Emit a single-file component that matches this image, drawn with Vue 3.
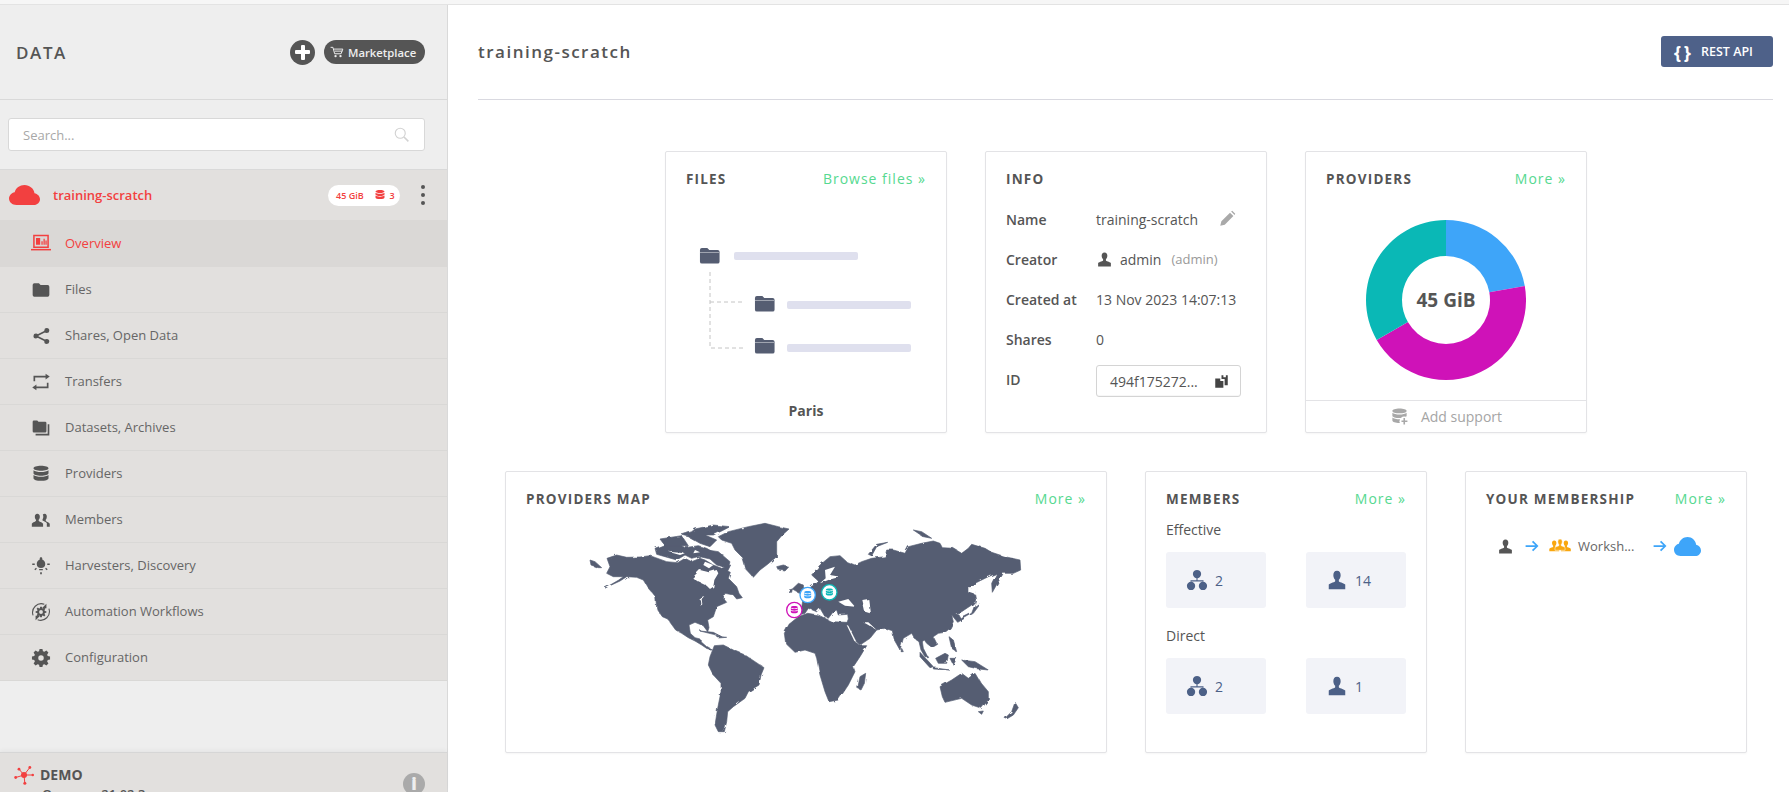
<script setup>
const gear = (cx, cy, r1, r2, hole, n = 8) => {
  let d = ''
  const step = (Math.PI * 2) / n
  for (let i = 0; i < n; i++) {
    const a = i * step
    const pts = [
      [r2, a - step * 0.36], [r1, a - step * 0.2], [r1, a + step * 0.2], [r2, a + step * 0.36]
    ]
    pts.forEach(([r, t], j) => {
      d += `${i === 0 && j === 0 ? 'M' : 'L'}${(cx + r * Math.sin(t)).toFixed(2)} ${(cy - r * Math.cos(t)).toFixed(2)}`
    })
  }
  d += `Z M${cx - hole} ${cy}a${hole} ${hole} 0 1 0 ${hole * 2} 0a${hole} ${hole} 0 1 0 ${-hole * 2} 0Z`
  return d
}

const folder = 'M2 6a2 2 0 0 1 2-2h5.500l2 2H20a2 2 0 0 1 2 2v10a2 2 0 0 1-2 2H4a2 2 0 0 1-2-2z'
const person = 'M12 2c-2.800 0-4 2.200-4 4.800 0 2 .8 3.800 2 5v1.600c0 1-5 1.600-7 3.600V22h18v-5c-2-2-7-2.600-7-3.600v-1.600c1.200-1.200 2-3 2-5C16 4.200 14.800 2 12 2z'
const db = 'M12 2c5 0 9 1.200 9 3s-4 3-9 3-9-1.200-9-3 4-3 9-3zM3 7.400c1.600 1.400 5.200 2.200 9 2.200s7.400-.8 9-2.200V11c0 1.700-4 3-9 3s-9-1.300-9-3zM3 13.200c1.600 1.400 5.200 2.200 9 2.200s7.400-.8 9-2.200V17c0 1.800-4 3.200-9 3.200S3 18.800 3 17z'
const cloud = 'M6.500 20C3.400 20 1 17.700 1 14.800c0-2.500 1.800-4.600 4.200-5.100C6 6.400 9 4 12.500 4c3.800 0 7 2.900 7.400 6.500 2.300.5 4.100 2.400 4.100 4.800 0 2.600-2.200 4.700-4.900 4.700z'
const members = 'M7.500 4.500C5.500 4.500 4.600 6.200 4.600 8c0 1.500.6 2.700 1.400 3.600v1.200C6 13.800 2 14.500 1 16.500V20h13.500v-3.500c-1-2-5.300-2.700-5.300-3.700v-1.200c.8-.9 1.400-2.100 1.400-3.600 0-1.800-.9-3.500-3.100-3.500zM16.500 4.500c-1 0-1.800.4-2.300 1 .9 1.800.8 4.200-.4 6v.8c0 .5 3.700 1.600 5.200 3.500V20h3.500v-3.500c-1-2-4.800-2.700-4.800-3.700v-1.200c.8-.9 1.300-2.100 1.300-3.600 0-1.800-.8-3.500-2.500-3.500z'

const nav = [
  { label: 'Overview', active: true, fill: [], stroke: ['M3.500 3h17v14h-17z', 'M0 20h24'], bars: ['M6 6h5v8H6zM12.500 10H14v4h-1.500zM15 7h1.500v7H15zM17.300 9h1.500v5h-1.500z'] },
  { label: 'Files', fill: [folder], stroke: [] },
  { label: 'Shares, Open Data', fill: ['M19 2.500a3 3 0 1 1-.1 6 3 3 0 0 1 .1-6zM19 15.500a3 3 0 1 1-.1 6 3 3 0 0 1 .1-6zM6 9a3 3 0 1 1-.1 6 3 3 0 0 1 .1-6z'], stroke: ['M18 6 6 12l12 6'] },
  { label: 'Transfers', fill: ['M17.500 2l5 3.500-5 3.500zM6.500 22l-5-3.500 5-3.500z'], stroke: ['M4 11V5.500h15', 'M20 13v5.500H5'] },
  { label: 'Datasets, Archives', fill: ['M2 4.500A1.500 1.500 0 0 1 3.500 3h4l1.500 1.500h8A1.500 1.500 0 0 1 18.500 6v10a1.500 1.500 0 0 1-1.500 1.500H3.500A1.500 1.500 0 0 1 2 16z'], stroke: ['M21 7.500V20H5.500'] },
  { label: 'Providers', fill: [db], stroke: [] },
  { label: 'Members', fill: [members], stroke: [] },
  { label: 'Harvesters, Discovery', fill: ['M12 1.500c.9 0 1.500.6 1.500 1.300v1.400c2.200.9 3.600 3 3.600 5.300 0 2.800-2 5-5.100 5S6.900 12.300 6.900 9.500c0-2.300 1.400-4.400 3.600-5.300V2.800c0-.7.6-1.300 1.500-1.300z', 'M9.800 15.500h4.400V17H9.800zM11 19.500h2V22h-2zM1.500 9h3v1.700h-3zM19.500 9h3v1.700h-3zM4 16l2-1.800 1.100 1.100-2 1.900zM20 16l-2-1.800-1.100 1.100 2 1.900z'], stroke: [] },
  { label: 'Automation Workflows', thin: true, fill: [gear(12, 12, 6.500, 4.800, 2.300), 'M18.500 2v5.500H13zM5.500 22v-5.500H11z'], stroke: ['M2.500 16A10.500 10.500 0 0 1 16 2.700', 'M21.500 8A10.500 10.500 0 0 1 8 21.300'] },
  { label: 'Configuration', fill: [gear(12, 12, 11, 8.400, 3.300)], stroke: [] }
]

const polar = (cx, cy, r, deg) => {
  const t = (deg * Math.PI) / 180
  return [cx + r * Math.sin(t), cy - r * Math.cos(t)]
}
const seg = (a, b, color) => {
  const R = 80, r = 44, c = 80
  const [x1, y1] = polar(c, c, R, a)
  const [x2, y2] = polar(c, c, R, b)
  const [x3, y3] = polar(c, c, r, b)
  const [x4, y4] = polar(c, c, r, a)
  const large = b - a > 180 ? 1 : 0
  return { color, d: `M${x1} ${y1}A${R} ${R} 0 ${large} 1 ${x2} ${y2}L${x3} ${y3}A${r} ${r} 0 ${large} 0 ${x4} ${y4}Z` }
}
const segments = [seg(0, 80, '#3ea5f9'), seg(80, 240, '#cf12b8'), seg(240, 360, '#0ab8b6')]

const land = [
  'M66 130L95 120 125 127 165 126 195 122 212 128 245 140 278 143 300 130 320 140 345 130 360 135 385 150 410 160 437 150 428 168 436 172 430 190 455 215 462 235 472 248 455 252 445 240 420 235 415 250 425 262 395 275 385 305 368 315 372 338 368 350 355 332 330 322 312 330 316 355 330 368 345 372 350 382 365 395 382 405 372 405 350 390 330 378 310 368 290 355 272 345 248 312 232 305 215 280 212 245 190 220 175 195 155 187 125 185 105 198 60 219 100 196 115 185 85 185 65 175 75 155Z',
  'M15 135L30 140 50 158 40 158 18 150Z',
  'M210 100L240 88 270 80 300 98 340 92 365 100 385 112 415 120 395 130 372 126 350 122 320 130 300 120 275 135 240 125 215 118Z',
  'M335 100L400 110 435 140 430 160 395 150 375 132 345 125Z',
  'M225 72L290 62 310 92 240 92Z',
  'M330 42L385 30 435 35 410 48 385 60 360 60 395 75 375 95 345 85 310 65 290 60 320 50Z',
  'M400 65L430 50 490 35 540 25 580 35 612 42 590 62 575 80 575 125 545 150 525 165 505 187 480 160 470 125 450 105 440 85 410 75Z',
  'M575 155L595 150 612 155 600 168 580 165Z',
  'M345 348L385 352 410 365 385 358ZM395 364L425 367 400 369Z',
  'M388 392L415 390 445 405 480 420 510 440 537 458 528 480 522 510 490 530 480 550 445 575 428 590 425 620 418 650 400 650 390 630 398 580 408 530 408 505 385 480 370 450 375 425Z',
  'M598 355L612 328 640 305 668 295 700 300 720 310 740 320 785 322 815 385 825 392 845 392 825 425 805 455 810 470 790 510 760 555 732 560 720 530 705 480 695 430 690 415 660 405 630 412 602 385Z',
  'M680 180L705 150 735 125 765 122 785 140 810 150 830 140 860 130 900 125 905 105 925 105 960 115 970 95 1010 85 1045 78 1065 85 1072 98 1105 100 1130 115 1150 100 1160 88 1200 100 1220 112 1260 125 1305 135 1307 165 1285 175 1255 175 1240 200 1222 232 1220 205 1235 175 1210 185 1170 205 1150 215 1170 230 1175 255 1160 270 1130 290 1100 298 1092 288 1122 300 1130 315 1118 322 1100 300 1105 320 1095 340 1080 352 1060 355 1045 365 1055 385 1038 395 1025 385 1018 375 1012 380 1015 400 1028 425 1020 425 1008 405 1002 380 990 372 980 355 955 370 945 405 928 375 922 347 900 340 875 345 855 370 825 390 815 380 785 325 790 312 788 298 760 300 755 285 745 290 730 310 720 305 705 280 695 290 670 280 660 295 640 300 620 305 610 298 620 280 650 278 655 245 678 215 695 205 700 198Z',
  'M622 222L640 205 655 210 656 225 640 232ZM612 225L622 222 620 232 610 232Z',
  'M850 118L875 88 908 82 875 95 860 122Z',
  'M985 45L1010 50 1040 70 1015 65Z',
  'M818 520L825 485 842 475 838 505 828 525Z',
  'M1065 515L1100 495 1130 475 1150 490 1170 475 1185 500 1210 530 1210 555 1190 580 1160 570 1130 550 1080 562 1072 545Z',
  'M1180 590L1195 588 1190 598Z',
  'M1260 610L1280 590 1290 562 1300 578 1285 600 1265 612Z',
  'M1005 412L1045 455 1035 458 1005 425ZM1045 458L1095 465 1045 462ZM1052 430L1080 415 1090 420 1085 445 1060 445ZM1095 430L1115 430 1105 450ZM1092 365L1105 375 1115 410 1100 400ZM1130 435L1170 440 1210 465 1180 462 1150 455ZM950 400L955 410 948 410Z',
  'M1130 310L1160 295 1175 255 1170 278 1185 268 1165 295 1130 315Z'
]
const seas = [
  'M322 188L345 165 372 172 395 165 400 175 388 195 385 215 375 222 365 212 340 200Z',
  'M340 250L358 243 350 252 352 268 347 272 345 254Z',
  'M415 240L445 240 440 248 420 250Z',
  'M720 165L750 155 735 180 765 185 730 195 705 205 722 190Z',
  'M760 260L790 252 810 275 780 272Z',
  'M832 255L850 252 855 295 840 290Z',
  'M835 322L850 322 875 345 850 330Z',
  'M785 330L790 332 816 385 808 378Z',
  'M1150 215L1170 225 1175 240 1150 232Z',
  'M360 140L385 150 372 160 355 150ZM250 110L300 115 285 120ZM330 105L345 112 325 115Z'
]
const pins = [
  { x: 628, y: 285, color: '#cf12b8' },
  { x: 668, y: 240, color: '#3ea5f9' },
  { x: 733, y: 232, color: '#0ab8b6' }
]
</script>

<template>
  <div class="page">
    <div class="strip"></div>
    <div class="shell">
      <aside class="side">
        <header class="side-head">
          <h1>DATA</h1>
          <div class="head-actions">
            <span class="plus"></span>
            <span class="market">
              <svg viewBox="0 0 24 20" class="cart"><path d="M1 2h4l3 11h11l3-8H6.500M8 8.500h13" fill="none" stroke="#eee" stroke-width="1.700"/><circle cx="9.500" cy="17" r="2" fill="#eee"/><circle cx="18" cy="17" r="2" fill="#eee"/></svg>
              Marketplace
            </span>
          </div>
        </header>
        <div class="search-wrap">
          <div class="search">
            <span>Search...</span>
            <svg viewBox="0 0 24 24" class="mag"><circle cx="10" cy="10" r="8" fill="none" stroke="#d2d2d2" stroke-width="1.800"/><path d="M16 16l7 7" stroke="#d2d2d2" stroke-width="2.500"/></svg>
          </div>
        </div>
        <div class="space-row">
          <svg viewBox="1 4 23 16" class="space-cloud" preserveAspectRatio="none"><path :d="cloud" fill="#f24040"/></svg>
          <span class="space-name">training-scratch</span>
          <span class="space-pill">
            <span>45 GiB</span>
            <svg viewBox="0 0 24 24" class="pill-db"><path :d="db" fill="#f24040"/></svg>
            <span>3</span>
          </span>
          <span class="kebab"><i></i><i></i><i></i></span>
        </div>
        <nav class="nav">
          <div v-for="item in nav" :key="item.label" class="nav-item" :class="{ active: item.active }">
            <svg viewBox="0 0 24 24" class="nav-icon">
              <path v-for="d in item.fill" :key="d" :d="d" fill-rule="evenodd" class="ic-fill" />
              <path v-for="d in item.stroke" :key="d" :d="d" class="ic-stroke" :class="{ thin: item.thin }" />
              <path v-for="d in item.bars || []" :key="d" :d="d" class="ic-fill" />
            </svg>
            <span>{{ item.label }}</span>
          </div>
        </nav>
        <div class="grow"></div>
        <footer class="side-foot">
          <div class="foot-text">
            <div class="demo">
              <svg viewBox="0 0 24 24" class="demo-icon">
                <path d="M12 12L6 5M12 12L19 3M12 12H23M12 12L13 22M12 12L2 15" stroke="#f24040" stroke-width="1.200"/>
                <circle cx="12" cy="12" r="3.600" fill="#f24040"/>
                <circle cx="6" cy="5" r="1.700" fill="#f24040"/><circle cx="19" cy="3" r="1.700" fill="#f24040"/><circle cx="22.500" cy="12" r="1.500" fill="#f24040"/><circle cx="13" cy="22" r="1.800" fill="#f24040"/><circle cx="2" cy="15" r="1.700" fill="#f24040"/>
              </svg>
              <b>DEMO</b>
            </div>
            <div class="version">Onezone 21.02.3</div>
          </div>
          <span class="info">i</span>
        </footer>
      </aside>

      <main class="main">
        <div class="main-head">
          <h2>training-scratch</h2>
          <button class="rest"><b>{ }</b><span>REST API</span></button>
        </div>
        <div class="row row-top">
          <section class="card">
            <div class="card-head"><h3>FILES</h3><a>Browse files »</a></div>
            <svg class="tree" viewBox="0 0 281 170" width="281" height="170">
              <path d="M45 62V138H78M45 92H78" class="dash" />
              <path :d="folder" transform="translate(33 34) scale(.98)" class="tree-f" />
              <rect x="35" y="42" width="19" height=".8" class="tree-l" />
              <rect x="69" y="42" width="124" height="8" rx="2" class="tree-b" />
              <path :d="folder" transform="translate(88 82) scale(.98)" class="tree-f" />
              <rect x="90" y="90" width="19" height=".8" class="tree-l" />
              <rect x="122" y="91" width="124" height="8" rx="2" class="tree-b" />
              <path :d="folder" transform="translate(88 124) scale(.98)" class="tree-f" />
              <rect x="90" y="132" width="19" height=".8" class="tree-l" />
              <rect x="122" y="134" width="124" height="8" rx="2" class="tree-b" />
            </svg>
            <div class="paris">Paris</div>
          </section>

          <section class="card">
            <div class="card-head"><h3>INFO</h3></div>
            <div class="info-list">
              <div class="info-row">
                <label>Name</label>
                <span>training-scratch</span>
                <svg viewBox="0 0 24 24" class="pencil"><path d="M3 21l1.500-6L16 3.500l4.500 4.500L9 19.500zM17.500 2l1.500-1 4 4-1 1.500z" fill="#a9a9a9"/></svg>
              </div>
              <div class="info-row">
                <label>Creator</label>
                <svg viewBox="0 0 24 24" class="creator-i"><path :d="person" fill="#555"/></svg>
                <span>admin</span><em>(admin)</em>
              </div>
              <div class="info-row"><label>Created at</label><span>13 Nov 2023 14:07:13</span></div>
              <div class="info-row"><label>Shares</label><span>0</span></div>
              <div class="info-row">
                <label>ID</label>
                <div class="id-box">
                  <span>494f175272...</span>
                  <svg viewBox="0 0 24 24" class="copy"><path d="M2 7h8v4h5v11H2zM12 2h3v3h4V2h3v16h-5V8h-5z" fill="#444"/></svg>
                </div>
              </div>
            </div>
          </section>

          <section class="card">
            <div class="card-head"><h3>PROVIDERS</h3><a>More »</a></div>
            <div class="donut-wrap">
              <svg viewBox="0 0 160 160" width="160" height="160">
                <path v-for="s in segments" :key="s.color" :d="s.d" :fill="s.color" />
              </svg>
              <span class="donut-label">45 GiB</span>
            </div>
            <div class="add-support">
              <svg viewBox="0 0 24 24" class="add-i"><path :d="db" fill="#a8a8a8"/><circle cx="18" cy="18" r="6" fill="#fff"/><path d="M14.500 17h2.500v-3h2v3h3v2h-3v3h-2v-3h-2.500z" fill="#a8a8a8"/></svg>
              <span>Add support</span>
            </div>
          </section>
        </div>

        <div class="row row-bottom">
          <section class="card map-card">
            <div class="card-head"><h3>PROVIDERS MAP</h3><a>More »</a></div>
            <svg class="map" viewBox="0 0 1350 675" width="450" height="225">
              <defs>
                <filter id="coast" x="-2%" y="-2%" width="104%" height="104%" filterUnits="objectBoundingBox">
                  <feTurbulence type="fractalNoise" baseFrequency="0.045" numOctaves="2" seed="4" result="n" />
                  <feDisplacementMap in="SourceGraphic" in2="n" scale="9" />
                </filter>
              </defs>
              <g filter="url(#coast)">
                <path v-for="d in land" :key="d" :d="d" class="land" />
                <path v-for="d in seas" :key="d" :d="d" fill="#fff" />
              </g>
              <g v-for="p in pins" :key="p.color">
                <circle :cx="p.x" :cy="p.y" r="23" fill="#fff" :stroke="p.color" stroke-width="4" />
                <path :d="db" :fill="p.color" :transform="`translate(${p.x - 14} ${p.y - 14}) scale(1.170)`" />
              </g>
            </svg>
          </section>

          <section class="card">
            <div class="card-head"><h3>MEMBERS</h3><a>More »</a></div>
            <div class="mem-label first">Effective</div>
            <div class="mem-grid">
              <div class="mem-box">
                <svg viewBox="0 0 24 24" class="mem-i"><circle cx="12" cy="5.500" r="4.500"/><circle cx="5.500" cy="18.500" r="4.500"/><circle cx="18.500" cy="18.500" r="4.500"/><path d="M12 9v4M5.500 14v-1h13v1" fill="none" stroke="#4c6087" stroke-width="1.200"/></svg>
                <span>2</span>
              </div>
              <div class="mem-box">
                <svg viewBox="0 0 24 24" class="mem-i"><path :d="person"/></svg>
                <span>14</span>
              </div>
            </div>
            <div class="mem-label">Direct</div>
            <div class="mem-grid">
              <div class="mem-box">
                <svg viewBox="0 0 24 24" class="mem-i"><circle cx="12" cy="5.500" r="4.500"/><circle cx="5.500" cy="18.500" r="4.500"/><circle cx="18.500" cy="18.500" r="4.500"/><path d="M12 9v4M5.500 14v-1h13v1" fill="none" stroke="#4c6087" stroke-width="1.200"/></svg>
                <span>2</span>
              </div>
              <div class="mem-box">
                <svg viewBox="0 0 24 24" class="mem-i"><path :d="person"/></svg>
                <span>1</span>
              </div>
            </div>
          </section>

          <section class="card">
            <div class="card-head"><h3>YOUR MEMBERSHIP</h3><a>More »</a></div>
            <div class="path-row">
              <svg viewBox="0 0 24 24" class="path-person"><path :d="person" fill="#555"/></svg>
              <svg viewBox="0 0 24 24" class="arrow"><path d="M1 12h20M13 4l8 8-8 8" fill="none" stroke="#3ea5f9" stroke-width="3"/></svg>
              <svg viewBox="0 0 32 24" class="group"><path :d="person" fill="#f9a70f" transform="translate(-2.500 2) scale(.82)"/><path :d="person" fill="#f9a70f" transform="translate(15 2) scale(.82)"/><path :d="person" fill="#f9a70f" transform="translate(6 0) scale(.84)" stroke="#fff" stroke-width=".9"/></svg>
              <span class="work">Worksh...</span>
              <svg viewBox="0 0 24 24" class="arrow arrow2"><path d="M1 12h20M13 4l8 8-8 8" fill="none" stroke="#3ea5f9" stroke-width="3"/></svg>
              <svg viewBox="1 4 23 16" class="path-cloud" preserveAspectRatio="none"><path :d="cloud" fill="#3ea5f9"/></svg>
            </div>
          </section>
        </div>
      </main>
    </div>
  </div>
</template>

<style>
html, body { margin: 0; background: #fff; overflow: hidden; }
</style>

<style scoped>
* { box-sizing: border-box; }
.page { width: 1789px; height: 792px; overflow: hidden; font-family: "Open Sans", sans-serif; color: #555; display: flex; flex-direction: column; }
.strip { height: 5px; flex: none; background: #f6f6f6; border-bottom: 1px solid #e3e3e3; }
.shell { flex: 1; display: flex; min-height: 0; }

.side { width: 448px; flex: none; background: #eee; border-right: 1px solid #d9d9d9; display: flex; flex-direction: column; }
.side-head { height: 95px; flex: none; display: flex; align-items: center; justify-content: space-between; padding: 0 22px 0 16px; border-bottom: 1px solid #d9d9d9; }
.side-head h1 { margin: 0; font-size: 17px; font-weight: 600; letter-spacing: 1.600px; color: #555; }
.head-actions { display: flex; align-items: center; gap: 9px; }
.plus { width: 25px; height: 25px; border-radius: 50%; background: #555; position: relative; }
.plus::before { content: ""; position: absolute; left: 5px; top: 10.500px; width: 15px; height: 4px; background: #fff; border-radius: 1px; }
.plus::after { content: ""; position: absolute; left: 10.500px; top: 5px; width: 4px; height: 15px; background: #fff; border-radius: 1px; }
.market { height: 24px; width: 101px; border-radius: 12px; background: #555; color: #eee; font-size: 11.300px; font-weight: 600; display: flex; align-items: center; gap: 4px; padding-left: 6px; }
.cart { width: 14px; height: 12px; flex: none; }

.search-wrap { height: 69px; flex: none; padding: 18px 22px 0 8px; }
.search { height: 33px; background: #fff; border: 1px solid #d8d8d8; border-radius: 3px; display: flex; align-items: center; justify-content: space-between; padding: 0 15px 0 14px; font-size: 13px; color: #a8a8a8; }
.mag { width: 15px; height: 15px; }

.space-row { height: 51px; flex: none; background: #e2e0de; border-top: 1px solid #d9d9d9; display: flex; align-items: center; padding: 0 0 0 9px; color: #f24040; position: relative; }
.space-cloud { width: 31px; height: 20px; flex: none; }
.space-name { margin-left: 13px; width: 275px; font-size: 13px; font-weight: 600; flex: none; }
.space-pill { position: absolute; left: 328px; display: flex; align-items: center; height: 21px; width: 72px; background: #fff; border-radius: 11px; padding-left: 8px; font-size: 9px; font-weight: 600; }
.pill-db { width: 12px; height: 12px; margin: 0 4px 0 10px; }
.kebab { position: absolute; left: 421px; display: flex; flex-direction: column; gap: 4px; }
.kebab i { width: 4px; height: 4px; border-radius: 50%; background: #555; display: block; }

.nav { flex: none; }
.nav-item { height: 46px; display: flex; align-items: center; padding-left: 31px; background: #e2e0de; border-bottom: 1px solid #d9d8d6; font-size: 13px; color: #666; }
.nav-item span { margin-left: 14px; padding-bottom: 2px; }
.nav-item.active { background: #dad8d6; color: #f24040; border-bottom-color: #dad8d6; height: 47px; }
.nav-item.active span { padding-bottom: 0; }
.nav-icon { width: 20px; height: 20px; flex: none; }
.ic-fill { fill: #555; }
.ic-stroke { fill: none; stroke: #555; stroke-width: 2; }
.ic-stroke.thin { stroke-width: 1.300; }
.active .ic-fill { fill: #f24040; }
.active .ic-stroke { stroke: #f24040; stroke-width: 1.800; }
.grow { flex: 1; }
.side-foot { height: 40px; flex: none; background: #e2e0de; border-top: 1px solid #d6d6d6; box-shadow: 0 -2px 4px rgba(0,0,0,.04); display: flex; justify-content: space-between; padding: 12px 22px 0 14px; overflow: hidden; }
.demo { display: flex; align-items: center; gap: 6px; font-size: 14px; line-height: 20px; }
.demo b { font-weight: 700; color: #555; }
.demo-icon { width: 20px; height: 20px; }
.version { font-size: 13px; padding-left: 28px; line-height: 18px; font-weight: 600; color: #555; }
.info { width: 22px; height: 22px; border-radius: 50%; background: #aaa; color: #eee; font-weight: 800; font-size: 17px; line-height: 22px; text-align: center; margin-top: 8px; flex: none; }

.main { flex: 1; padding: 0 16px 0 30px; min-width: 0; }
.main-head { height: 95px; border-bottom: 1px solid #d9d9e0; display: flex; align-items: center; justify-content: space-between; padding-bottom: 1px; }
.main-head h2 { margin: 0; font-size: 17px; font-weight: 600; letter-spacing: 1.500px; color: #555; }
.rest { width: 112px; height: 31px; background: #4e6189; border: 0; border-radius: 3px; color: #fff; font-family: inherit; font-size: 12.500px; font-weight: 600; display: flex; align-items: center; padding: 0 0 0 13px; }
.rest b { font-size: 18px; font-weight: 700; width: 27px; letter-spacing: 0; line-height: 1; word-spacing: -2px; text-align: left; }

.row { display: flex; justify-content: center; gap: 38px; padding-left: 1px; }
.row-top { margin-top: 51px; }
.row-bottom { margin-top: 38px; }
.card { width: 282px; height: 282px; flex: none; background: #fff; border: 1px solid #e3e3e6; border-radius: 2px; box-shadow: 0 1px 2px rgba(0,0,0,.04); position: relative; display: flex; flex-direction: column; }
.map-card { width: 602px; }
.card-head { display: flex; justify-content: space-between; align-items: center; padding: 14px 20px 0; height: 40px; flex: none; }
h3 { margin: 0; font-size: 13.500px; font-weight: 700; letter-spacing: 1.200px; color: #555; }
.card-head a { font-size: 14px; letter-spacing: 1px; color: #56d990; padding-bottom: 2px; }

.tree { display: block; margin-top: 18px; margin-left: -1px; }
.dash { fill: none; stroke: #c4c4c4; stroke-width: 1; stroke-dasharray: 4 3; }
.tree-f { fill: #555d72; }
.tree-l { fill: #fff; opacity: .55; }
.tree-b { fill: #dfe0ee; }
.paris { font-size: 14px; font-weight: 700; text-align: center; margin-top: auto; padding-bottom: 12px; color: #555; }

.info-list { padding: 7px 0 0 20px; display: flex; flex-direction: column; }
.info-row { height: 40px; display: flex; align-items: center; font-size: 14px; color: #555; }
.info-row label { width: 90px; font-weight: 600; flex: none; }
.pencil { width: 18px; height: 18px; margin-left: 20px; }
.creator-i { width: 17px; height: 17px; margin: 0 7px 0 0; }
.info-row em { font-style: normal; font-size: 13px; color: #999; margin-left: 10px; }
.id-box { width: 145px; height: 32px; border: 1px solid #d4d4d4; border-radius: 3px; display: flex; align-items: center; justify-content: space-between; padding: 0 11px 0 13px; margin-top: 4px; box-shadow: inset 0 -1px 0 rgba(0,0,0,.03); }
.copy { width: 15px; height: 15px; }

.donut-wrap { position: relative; width: 160px; height: 160px; margin: 28px auto 0; }
.donut-wrap svg { display: block; }
.donut-label { position: absolute; inset: 0; display: flex; align-items: center; justify-content: center; font-size: 19px; font-weight: 700; color: #555; }
.add-support { margin-top: auto; height: 32px; border-top: 1px solid #e3e3e6; display: flex; align-items: center; justify-content: center; gap: 12px; font-size: 14px; color: #a5a5a5; }
.add-i { width: 19px; height: 19px; }

.map { display: block; margin: 3px 0 0 79px; }
.land { fill: #555d72; stroke: #555d72; stroke-width: 2; stroke-linejoin: round; }

.mem-label { padding-left: 20px; font-size: 14px; line-height: 20px; margin-top: 18px; }
.mem-label.first { margin-top: 8px; }
.mem-grid { display: flex; justify-content: space-between; padding: 0 20px; margin-top: 12px; }
.mem-box { width: 100px; height: 56px; background: #f2f3f8; border-radius: 3px; display: flex; align-items: center; padding-left: 20px; color: #4c6087; font-size: 14px; gap: 7px; }
.mem-i { width: 22px; height: 22px; fill: #4c6087; }

.path-row { display: flex; align-items: center; margin-top: 24px; padding-left: 31px; font-size: 13px; color: #666; height: 20px; }
.path-person { width: 17px; height: 17px; }
.arrow { width: 14px; height: 14px; margin-left: 11px; }
.group { width: 22px; height: 16px; margin-left: 10px; }
.work { margin-left: 7px; width: 60px; }
.arrow2 { margin-left: 15px; }
.path-cloud { width: 27px; height: 19px; margin-left: 7px; }
</style>
